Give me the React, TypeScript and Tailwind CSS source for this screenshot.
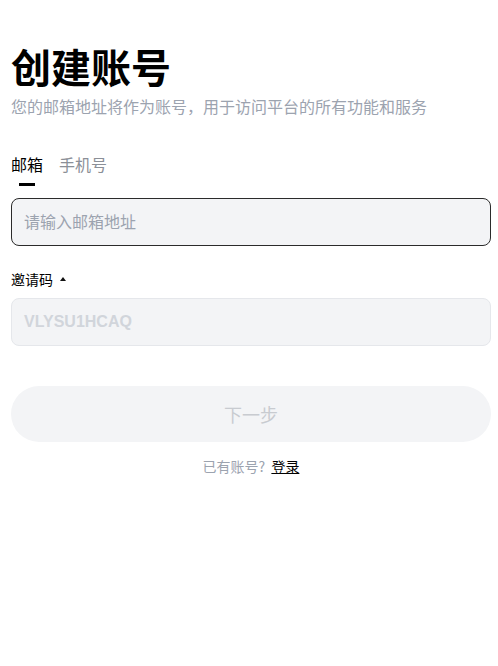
import { useState } from 'react'

const font = "font-['Noto_Sans_CJK_SC','Liberation_Sans',sans-serif]"

export default function App() {
  const [tab, setTab] = useState<'email' | 'phone'>('email')
  const [inviteOpen, setInviteOpen] = useState(true)

  return (
    <div className={`min-h-[666px] w-full bg-white pl-[11px] pr-[7px] pt-[46px] ${font}`}>
      <h1 className="text-[40px] font-bold leading-[40px] text-black">创建账号</h1>
      <p className="mt-[8px] text-base leading-6 text-[#9ca3af]">
        您的邮箱地址将作为账号，用于访问平台的所有功能和服务
      </p>

      {/* Tabs */}
      <div className="mt-[34px] flex gap-4">
        {[
          { key: 'email' as const, label: '邮箱' },
          { key: 'phone' as const, label: '手机号' },
        ].map((t) => (
          <button
            key={t.key}
            onClick={() => setTab(t.key)}
            className="flex flex-col items-center bg-transparent p-0"
          >
            <span
              className={
                'text-base leading-6 ' + (tab === t.key ? 'text-black' : 'text-[#8b8f97]')
              }
            >
              {t.label}
            </span>
            <span
              className={
                'mt-[7px] h-[3px] w-4 ' + (tab === t.key ? 'bg-black' : 'bg-transparent')
              }
            />
          </button>
        ))}
      </div>

      <input
        type="text"
        placeholder={tab === 'email' ? '请输入邮箱地址' : '请输入手机号'}
        className="mt-3 block h-12 w-[480px] rounded-lg border border-[#2b2b2b] bg-[#f3f4f6] px-3 pb-[2px] text-base text-black outline-none placeholder:text-[#9ca3af]"
      />

      <button
        onClick={() => setInviteOpen(!inviteOpen)}
        className="mt-[23px] flex items-center gap-[7px] bg-transparent p-0 text-sm leading-5 text-black"
      >
        邀请码
        <svg width="6" height="4" viewBox="0 0 6 4" className={inviteOpen ? '' : 'rotate-180'}>
          <path d="M3 0 L6 4 L0 4 Z" fill="#111" />
        </svg>
      </button>

      {inviteOpen && (
        <div className="mt-[9px] flex h-12 w-[480px] items-center rounded-lg border border-[#e5e7eb] bg-[#f3f4f6] px-3 font-['Liberation_Sans',sans-serif] text-base font-bold text-[#d1d5db]">
          VLYSU1HCAQ
        </div>
      )}

      <button
        disabled
        className="mt-10 flex h-14 w-[480px] items-center justify-center rounded-full bg-[#f3f4f6] text-lg text-[#c8cbd0]"
      >
        下一步
      </button>

      <p className="mt-[14px] w-[480px] text-center text-sm leading-5 text-[#9ca3af]">
        已有账号? <a className="ml-[3px] text-black underline">登录</a>
      </p>
    </div>
  )
}
